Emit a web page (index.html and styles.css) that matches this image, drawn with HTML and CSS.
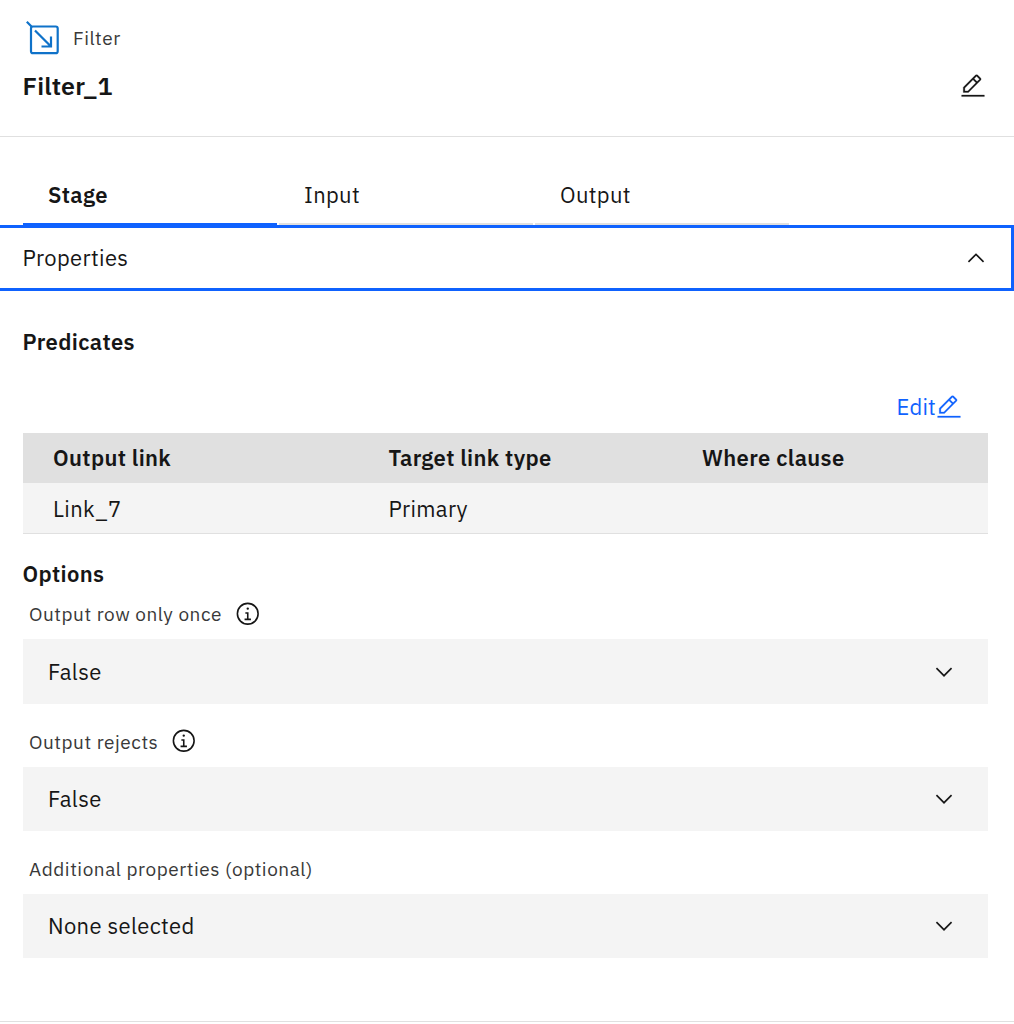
FILE: index.html
```html
<!DOCTYPE html>
<html lang="en">
<head>
<meta charset="utf-8">
<title>Filter_1</title>
<link rel="stylesheet" href="styles.css">
</head>
<body>
<svg class="defs" aria-hidden="true">
  <symbol id="edit" viewBox="0 0 32 32"><path d="M2 27h28v2H2zM25.4 9c.8-.8.8-2 0-2.8l-3.6-3.6c-.8-.8-2-.8-2.8 0l-15 15V24h6.4l15-15zm-5-5L24 7.600l-3 3L17.400 7l3-3zM6 22v-3.600l10-10 3.600 3.600-10 10H6z"/></symbol>
  <symbol id="chevron" viewBox="0 0 16 16"><path d="M8 11 3 6l.7-.7L8 9.600l4.300-4.300.7.700z"/></symbol>
  <symbol id="info" viewBox="0 0 32 32"><path d="M17 22v-8h-4v2h2v6h-3v2h8v-2zM16 8a1.500 1.500 0 1 0 1.500 1.500A1.500 1.500 0 0 0 16 8z"/><path d="M16 30a14 14 0 1 1 14-14 14 14 0 0 1-14 14zm0-26a12 12 0 1 0 12 12A12 12 0 0 0 16 4z"/></symbol>
</svg>
<main class="panel">
  <header class="header">
    <div class="kind">
      <svg class="kind-icon" viewBox="0 0 34 34"><rect x="5" y="5.500" width="26.700" height="26.700" rx="2"/><path d="M.8.800 6 6M9 9.500 24.500 25M15.500 25.500h9.500v-10"/></svg>
      <span class="kind-name">Filter</span>
    </div>
    <div class="title-row">
      <h1 class="title">Filter_1</h1>
      <svg class="icon"><use href="#edit"/></svg>
    </div>
  </header>
  <nav class="tabs">
    <div class="tab active">Stage</div>
    <div class="tab">Input</div>
    <div class="tab">Output</div>
  </nav>
  <div class="accordion">
    <span>Properties</span>
    <svg class="chevron up"><use href="#chevron"/></svg>
  </div>
  <section class="content">
    <h2 class="heading predicates">Predicates</h2>
    <div class="edit-row"><a class="edit"><span>Edit</span><svg class="icon"><use href="#edit"/></svg></a></div>
    <div class="table">
      <div class="row head"><span>Output link</span><span>Target link type</span><span>Where clause</span></div>
      <div class="row"><span>Link_7</span><span>Primary</span><span></span></div>
    </div>
    <h2 class="heading options">Options</h2>
    <div class="label"><span>Output row only once</span><svg class="info"><use href="#info"/></svg></div>
    <div class="select"><span>False</span><svg class="chevron"><use href="#chevron"/></svg></div>
    <div class="label"><span>Output rejects</span><svg class="info"><use href="#info"/></svg></div>
    <div class="select"><span>False</span><svg class="chevron"><use href="#chevron"/></svg></div>
    <div class="label"><span>Additional properties (optional)</span></div>
    <div class="select"><span>None selected</span><svg class="chevron"><use href="#chevron"/></svg></div>
  </section>
</main>
</body>
</html>
```
FILE: styles.css
```css
* { box-sizing: border-box; }
body {
  margin: 0;
  background: #fff;
  color: #161616;
  font: 22px/30px "IBM Plex Sans", Roboto, sans-serif;
  letter-spacing: .35px;
}
.defs { position: absolute; width: 0; height: 0; }
svg { fill: currentColor; flex: none; }
.icon { width: 26px; height: 26px; stroke: currentColor; stroke-width: .3; }
.panel { height: 1022px; border-bottom: 1px solid #e0e0e0; overflow: hidden; }
.header { height: 137px; padding: 20px 28px 0 22.5px; border-bottom: 1px solid #e0e0e0; }
.kind { display: flex; align-items: center; height: 36px; padding-left: 3px; gap: 13.5px; }
.kind-icon { width: 34px; height: 34px; fill: none; stroke: #0f72c9; stroke-width: 2.2; }
.kind-name { font-size: 19px; letter-spacing: .55px; color: #393939; }
.title-row { display: flex; align-items: center; justify-content: space-between; height: 60px; }
.title { margin: 0; font-size: 25px; font-weight: 600; letter-spacing: .2px; }
.tabs { display: flex; gap: 2px; height: 88px; padding: 28px 0 0 23px; }
.tab { display: flex; align-items: center; width: 254px; padding: 2px 0 0 25px; border-bottom: 2px solid #e0e0e0; }
.active { border-bottom: 2px solid #0f62fe; font-weight: 600; }
.accordion { display: flex; align-items: center; justify-content: space-between; height: 66px; padding: 0 22px 1px 22.5px; border: 3px solid #0f62fe; border-left: 0; }
.chevron { width: 26px; height: 26px; }
.up { transform: rotate(180deg); }
.content { padding: 0 26px 0 23px; }
.heading { display: flex; align-items: center; margin: 0 0 0 -.5px; font-size: 22px; font-weight: 600; }
.predicates { height: 102px; }
.edit-row { display: flex; justify-content: flex-end; height: 40px; padding-right: 26px; }
.edit { display: flex; align-items: center; height: 28px; color: #0f62fe; letter-spacing: .2px; }
.table { height: 101px; border-bottom: 1px solid #e0e0e0; background: #f4f4f4; }
.row { display: grid; grid-template-columns: 335.5px 313.5px 1fr; align-items: center; height: 51px; padding-left: 30px; }
.head { height: 50px; background: #e0e0e0; font-weight: 600; }
.options { height: 53px; padding-top: 26px; }
.label { display: flex; align-items: center; height: 63px; padding: 12px 0 0 6px; gap: 13px; font-size: 19px; letter-spacing: .54px; color: #393939; }
.options + .label { height: 52px; padding-top: 2px; }
.info { width: 25.500px; height: 25.500px; margin-top: -1px; color: #161616; }
.select { display: flex; align-items: center; justify-content: space-between; height: 64px; padding: 0 31px 0 25px; background: #f4f4f4; }
.options + .label + .select { height: 65px; }
```
